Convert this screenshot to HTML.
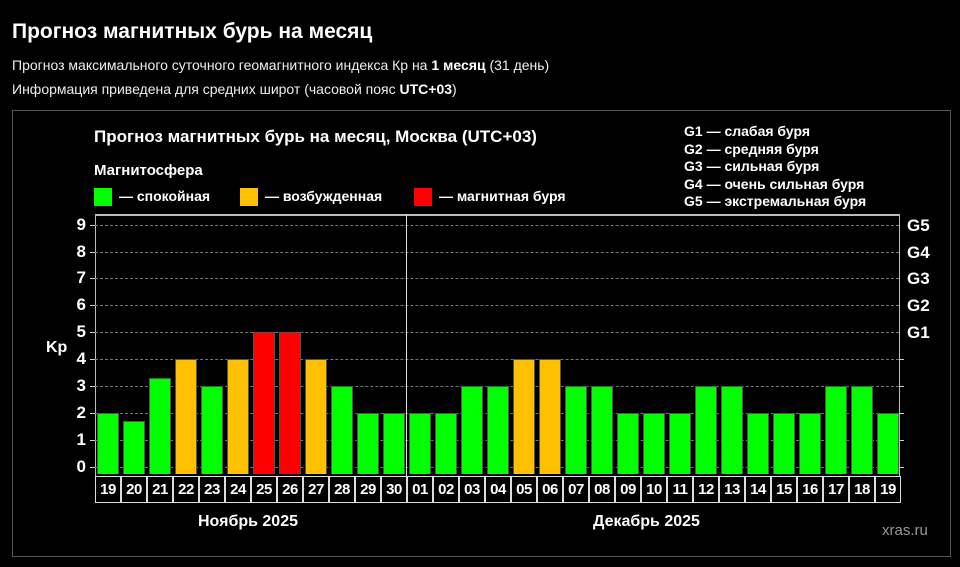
<!DOCTYPE html>
<html><head><meta charset="utf-8"><style>
*{margin:0;padding:0;box-sizing:border-box}
body{width:960px;height:567px;background:#000;color:#fff;font-family:"Liberation Sans",Arial,sans-serif;position:relative;overflow:hidden}
.a{position:absolute;white-space:nowrap}
.b{position:absolute;width:22px;border:1px solid #555;border-bottom:none}
.g{background:#00ff00}.y{background:#ffc000}.r{background:#ff0000}
.d{position:absolute;top:476px;height:27px;width:26px;border:1px solid #ddd;font-weight:bold;font-size:15px;text-align:center;line-height:25px;letter-spacing:-0.5px}
.gl{position:absolute;left:95px;width:804px;border-top:1px dashed #777}
.yl{position:absolute;font-weight:bold;font-size:17px;width:20px;text-align:right;left:66px}
.gr{position:absolute;font-weight:bold;font-size:17px;left:907px}
.tk{position:absolute;width:5px;border-top:1px solid #ccc}
</style></head><body>
<div class="a" style="left:12px;top:20px;font-size:21px;font-weight:bold">Прогноз магнитных бурь на месяц</div>
<div class="a" style="left:12px;top:57px;font-size:14px;color:#eee">Прогноз максимального суточного геомагнитного индекса Кр на <b style="color:#fff">1 месяц</b> (31 день)</div>
<div class="a" style="left:12px;top:81px;font-size:14px;color:#eee">Информация приведена для средних широт (часовой пояс <b style="color:#fff">UTC+03</b>)</div>
<div class="a" style="left:12px;top:110px;width:939px;height:447px;border:1px solid #555"></div>
<div class="a" style="left:94px;top:127px;font-size:17px;font-weight:bold">Прогноз магнитных бурь на месяц, Москва (UTC+03)</div>
<div class="a" style="left:94px;top:162px;font-size:15px;font-weight:bold">Магнитосфера</div>
<div class="a g" style="left:94px;top:188px;width:18px;height:18px"></div>
<div class="a" style="left:119px;top:188px;font-size:14px;font-weight:bold">— спокойная</div>
<div class="a y" style="left:240px;top:188px;width:18px;height:18px"></div>
<div class="a" style="left:265px;top:188px;font-size:14px;font-weight:bold">— возбужденная</div>
<div class="a r" style="left:414px;top:188px;width:18px;height:18px"></div>
<div class="a" style="left:439px;top:188px;font-size:14px;font-weight:bold">— магнитная буря</div>
<div class="a" style="left:684px;top:123px;font-size:14px;font-weight:bold;line-height:17.5px">G1 — слабая буря<br>G2 — средняя буря<br>G3 — сильная буря<br>G4 — очень сильная буря<br>G5 — экстремальная буря</div>
<div class="a" style="left:95px;top:214px;width:805px;height:262px;border-top:2px solid #bbb;border-left:1px solid #bbb;border-right:1px solid #bbb"></div>
<div class="gl" style="top:225px"></div><div class="gl" style="top:252px"></div><div class="gl" style="top:278px"></div><div class="gl" style="top:305px"></div><div class="gl" style="top:332px"></div><div class="gl" style="top:359px"></div><div class="gl" style="top:386px"></div><div class="gl" style="top:413px"></div><div class="gl" style="top:440px"></div><div class="gl" style="top:467px"></div>
<div class="tk" style="left:90px;top:225px"></div><div class="tk" style="left:90px;top:252px"></div><div class="tk" style="left:90px;top:278px"></div><div class="tk" style="left:90px;top:305px"></div><div class="tk" style="left:90px;top:332px"></div><div class="tk" style="left:90px;top:359px"></div><div class="tk" style="left:90px;top:386px"></div><div class="tk" style="left:90px;top:413px"></div><div class="tk" style="left:90px;top:440px"></div><div class="tk" style="left:90px;top:467px"></div>
<div class="a" style="left:406px;top:214px;width:1px;height:262px;background:#ddd"></div>
<div class="yl" style="top:215px">9</div><div class="yl" style="top:242px">8</div><div class="yl" style="top:268px">7</div><div class="yl" style="top:295px">6</div><div class="yl" style="top:322px">5</div><div class="yl" style="top:349px">4</div><div class="yl" style="top:376px">3</div><div class="yl" style="top:403px">2</div><div class="yl" style="top:430px">1</div><div class="yl" style="top:457px">0</div>
<div class="a" style="left:46px;top:339px;font-size:16px;font-weight:bold">Kp</div>
<div class="gr" style="top:216px">G5</div><div class="gr" style="top:243px">G4</div><div class="gr" style="top:269px">G3</div><div class="gr" style="top:296px">G2</div><div class="gr" style="top:323px">G1</div>
<div class="tk" style="left:899px;top:359px"></div><div class="tk" style="left:899px;top:386px"></div><div class="tk" style="left:899px;top:413px"></div><div class="tk" style="left:899px;top:440px"></div><div class="tk" style="left:899px;top:467px"></div>
<div class="b g" style="left:97px;top:413px;height:61px"></div>
<div class="b g" style="left:123px;top:421px;height:53px"></div>
<div class="b g" style="left:149px;top:378px;height:96px"></div>
<div class="b y" style="left:175px;top:359px;height:115px"></div>
<div class="b g" style="left:201px;top:386px;height:88px"></div>
<div class="b y" style="left:227px;top:359px;height:115px"></div>
<div class="b r" style="left:253px;top:332px;height:142px"></div>
<div class="b r" style="left:279px;top:332px;height:142px"></div>
<div class="b y" style="left:305px;top:359px;height:115px"></div>
<div class="b g" style="left:331px;top:386px;height:88px"></div>
<div class="b g" style="left:357px;top:413px;height:61px"></div>
<div class="b g" style="left:383px;top:413px;height:61px"></div>
<div class="b g" style="left:409px;top:413px;height:61px"></div>
<div class="b g" style="left:435px;top:413px;height:61px"></div>
<div class="b g" style="left:461px;top:386px;height:88px"></div>
<div class="b g" style="left:487px;top:386px;height:88px"></div>
<div class="b y" style="left:513px;top:359px;height:115px"></div>
<div class="b y" style="left:539px;top:359px;height:115px"></div>
<div class="b g" style="left:565px;top:386px;height:88px"></div>
<div class="b g" style="left:591px;top:386px;height:88px"></div>
<div class="b g" style="left:617px;top:413px;height:61px"></div>
<div class="b g" style="left:643px;top:413px;height:61px"></div>
<div class="b g" style="left:669px;top:413px;height:61px"></div>
<div class="b g" style="left:695px;top:386px;height:88px"></div>
<div class="b g" style="left:721px;top:386px;height:88px"></div>
<div class="b g" style="left:747px;top:413px;height:61px"></div>
<div class="b g" style="left:773px;top:413px;height:61px"></div>
<div class="b g" style="left:799px;top:413px;height:61px"></div>
<div class="b g" style="left:825px;top:386px;height:88px"></div>
<div class="b g" style="left:851px;top:386px;height:88px"></div>
<div class="b g" style="left:877px;top:413px;height:61px"></div>
<div class="d" style="left:95px">19</div><div class="d" style="left:121px">20</div><div class="d" style="left:147px">21</div><div class="d" style="left:173px">22</div><div class="d" style="left:199px">23</div><div class="d" style="left:225px">24</div><div class="d" style="left:251px">25</div><div class="d" style="left:277px">26</div><div class="d" style="left:303px">27</div><div class="d" style="left:329px">28</div><div class="d" style="left:355px">29</div><div class="d" style="left:381px">30</div>
<div class="d" style="left:407px">01</div><div class="d" style="left:433px">02</div><div class="d" style="left:459px">03</div><div class="d" style="left:485px">04</div><div class="d" style="left:511px">05</div><div class="d" style="left:537px">06</div><div class="d" style="left:563px">07</div><div class="d" style="left:589px">08</div><div class="d" style="left:615px">09</div><div class="d" style="left:641px">10</div><div class="d" style="left:667px">11</div><div class="d" style="left:693px">12</div><div class="d" style="left:719px">13</div><div class="d" style="left:745px">14</div><div class="d" style="left:771px">15</div><div class="d" style="left:797px">16</div><div class="d" style="left:823px">17</div><div class="d" style="left:849px">18</div><div class="d" style="left:875px">19</div>
<div class="a" style="left:198px;top:513px;font-size:16px;font-weight:bold">Ноябрь 2025</div>
<div class="a" style="left:593px;top:513px;font-size:16px;font-weight:bold">Декабрь 2025</div>
<div class="a" style="left:882px;top:522px;font-size:15px;color:#999">xras.ru</div>
</body></html>
